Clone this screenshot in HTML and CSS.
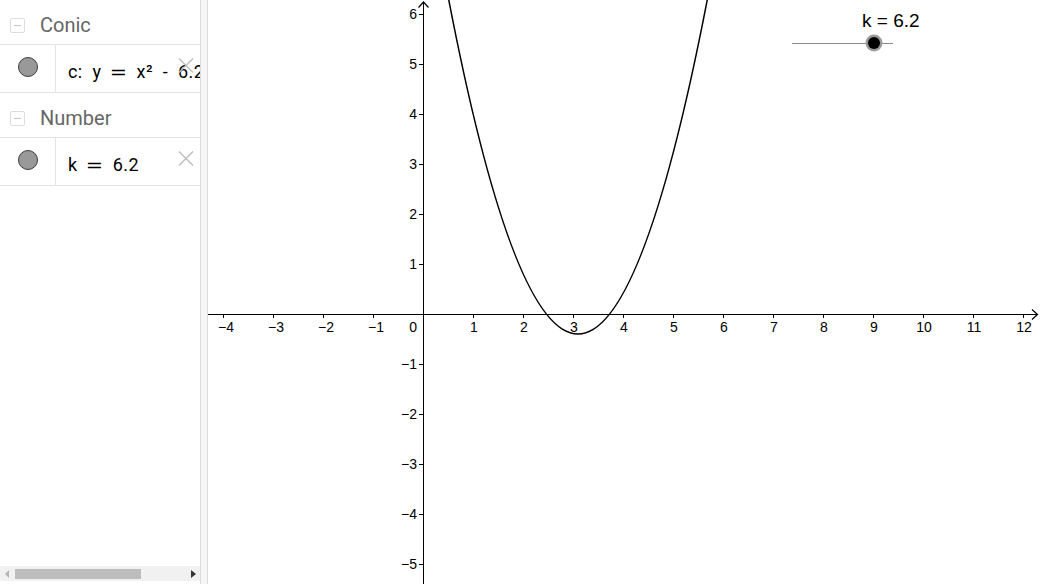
FILE: index.html
```html
<!DOCTYPE html>
<html>
<head>
<meta charset="utf-8">
<link rel="stylesheet" href="styles.css">
</head>
<body>
<div class="app">
  <div class="algebra">
    <div class="list">
      <div class="group">
        <span class="toggle"><span class="dash"></span></span>
        <span class="gname">Conic</span>
      </div>
      <div class="item">
        <div class="marker"><span class="dot"></span></div>
        <div class="expr">c: y <span class="eq">=</span> x² - 6.2x + 9.2</div>
        <span class="del">
          <svg width="16" height="15" viewBox="0 0 16 15"><path d="M1 0.5 L15 14.5 M15 0.5 L1 14.5" stroke="#bdbdbd" stroke-width="1.4" fill="none"/></svg>
        </span>
      </div>
      <div class="group">
        <span class="toggle"><span class="dash"></span></span>
        <span class="gname">Number</span>
      </div>
      <div class="item">
        <div class="marker"><span class="dot"></span></div>
        <div class="expr">k <span class="eq">=</span> 6.2</div>
        <span class="del">
          <svg width="16" height="15" viewBox="0 0 16 15"><path d="M1 0.5 L15 14.5 M15 0.5 L1 14.5" stroke="#bdbdbd" stroke-width="1.4" fill="none"/></svg>
        </span>
      </div>
    </div>
    <div class="hscroll">
      <span class="arrow-left"></span>
      <span class="thumb"></span>
      <span class="arrow-right"></span>
    </div>
  </div>
  <div class="splitter"></div>
  <div class="graphics">
    <svg class="plot" width="832" height="584" viewBox="0 0 832 584">
      <g stroke="#000" stroke-width="1" fill="none" shape-rendering="crispEdges">
        <line x1="0" y1="314.5" x2="829" y2="314.5"/>
        <line x1="215.5" y1="2" x2="215.5" y2="584"/>
        <path d="M15.5 315 V318 M65.5 315 V318 M115.5 315 V318 M165.5 315 V318 M265.5 315 V318 M315.5 315 V318 M365.5 315 V318 M415.5 315 V318 M465.5 315 V318 M515.5 315 V318 M565.5 315 V318 M615.5 315 V318 M665.5 315 V318 M715.5 315 V318 M765.5 315 V318 M815.5 315 V318"/>
        <path d="M211 14.5 H215 M211 64.5 H215 M211 114.5 H215 M211 164.5 H215 M211 214.5 H215 M211 264.5 H215 M211 364.5 H215 M211 414.5 H215 M211 464.5 H215 M211 514.5 H215 M211 564.5 H215"/>
      </g>
      <g stroke="#000" stroke-width="1.2" fill="none">
        <path d="M824 309.5 L829.5 314.5 L824 319.5"/>
        <path d="M210.5 7.5 L215.5 2 L220.5 7.5"/>
      </g>
      <g class="ticklabels" text-anchor="middle">
        <text x="18" y="332">−4</text>
        <text x="68" y="332">−3</text>
        <text x="118" y="332">−2</text>
        <text x="168" y="332">−1</text>
        <text x="266" y="332">1</text>
        <text x="316" y="332">2</text>
        <text x="366" y="332">3</text>
        <text x="416" y="332">4</text>
        <text x="466" y="332">5</text>
        <text x="516" y="332">6</text>
        <text x="566" y="332">7</text>
        <text x="616" y="332">8</text>
        <text x="666" y="332">9</text>
        <text x="716" y="332">10</text>
        <text x="766" y="332">11</text>
        <text x="816" y="332">12</text>
      </g>
      <g class="ticklabels" text-anchor="end">
        <text x="209" y="332">0</text>
        <text x="209" y="19">6</text>
        <text x="209" y="69">5</text>
        <text x="209" y="119">4</text>
        <text x="209" y="169">3</text>
        <text x="209" y="219">2</text>
        <text x="209" y="269">1</text>
        <text x="209" y="369">−1</text>
        <text x="209" y="419">−2</text>
        <text x="209" y="469">−3</text>
        <text x="209" y="519">−4</text>
        <text x="209" y="569">−5</text>
      </g>
      <path d="M235 -30.5 Q370 698.5 505 -30.5" stroke="#000" stroke-width="1.5" fill="none"/>
      <line x1="584" y1="43.5" x2="685" y2="43.5" stroke="#8a8a8a" stroke-width="1"/>
      <circle cx="666" cy="43" r="8.5" fill="#9a9a9a"/>
      <circle cx="666" cy="43" r="6" fill="#000"/>
      <text class="slabel" x="654" y="27">k = 6.2</text>
    </svg>
  </div>
</div>
</body>
</html>
```
FILE: styles.css
```css
html, body {
  margin: 0;
  padding: 0;
  background: #fff;
}
.app {
  display: flex;
  width: 1040px;
  height: 584px;
  overflow: hidden;
}
.algebra {
  width: 200px;
  flex: none;
  display: flex;
  flex-direction: column;
  background: #fff;
  border-right: 1px solid #dcdcdc;
}
.list {
  flex: 1;
}
.group {
  height: 38px;
  padding-top: 6px;
  display: flex;
  align-items: center;
  padding-left: 10px;
  border-bottom: 1px solid #e4e4e4;
}
.toggle {
  width: 13px;
  height: 13px;
  border: 1px solid #dedede;
  border-radius: 2px;
  display: flex;
  align-items: center;
  justify-content: center;
  margin-right: 15px;
}
.dash {
  width: 7px;
  height: 1px;
  background: #c4c4c4;
}
.gname {
  font-family: Roboto, "Liberation Sans", sans-serif;
  font-size: 20px;
  color: #666;
}
.item {
  position: relative;
  display: flex;
  height: 47px;
  border-bottom: 1px solid #e4e4e4;
  overflow: hidden;
}
.marker {
  width: 56px;
  flex: none;
  border-right: 1px solid #e4e4e4;
  display: flex;
  justify-content: center;
  padding-top: 12px;
  box-sizing: border-box;
}
.dot {
  width: 18px;
  height: 18px;
  border-radius: 50%;
  background: #999;
  border: 1px solid #3d3d3d;
}
.expr {
  padding-left: 12px;
  padding-top: 17px;
  font-family: Roboto, "Liberation Sans", sans-serif;
  font-size: 18px;
  line-height: 20px;
  color: #000;
  white-space: nowrap;
  word-spacing: 5px;
  letter-spacing: 0.4px;
}
.eq {
  font-family: "DejaVu Sans", sans-serif;
  font-size: 18px;
  display: inline-block;
  transform: scaleX(1.15);
}
.del {
  position: absolute;
  right: 6px;
  top: 13px;
  width: 16px;
  height: 15px;
}
.del svg {
  display: block;
}
.hscroll {
  height: 15px;
  margin-bottom: 3px;
  background: #f1f1f1;
  display: flex;
  align-items: center;
  position: relative;
}
.arrow-left {
  width: 0;
  height: 0;
  border-top: 4px solid transparent;
  border-bottom: 4px solid transparent;
  border-right: 4px solid #b5b5b5;
  margin-left: 5px;
}
.thumb {
  width: 126px;
  height: 10px;
  background: #bdbdbd;
  margin-left: 6px;
}
.arrow-right {
  width: 0;
  height: 0;
  border-top: 4px solid transparent;
  border-bottom: 4px solid transparent;
  border-left: 5px solid #333;
  margin-left: auto;
  margin-right: 4px;
}
.splitter {
  width: 6px;
  flex: none;
  background: #f6f6f6;
  border-right: 1px solid #dcdcdc;
}
.graphics {
  flex: 1;
  overflow: hidden;
}
.plot {
  display: block;
}
.ticklabels text {
  font-family: "Liberation Sans", Arial, sans-serif;
  font-size: 14px;
  fill: #000;
}
.slabel {
  font-family: "Liberation Sans", Arial, sans-serif;
  font-size: 19px;
  fill: #000;
}
```
